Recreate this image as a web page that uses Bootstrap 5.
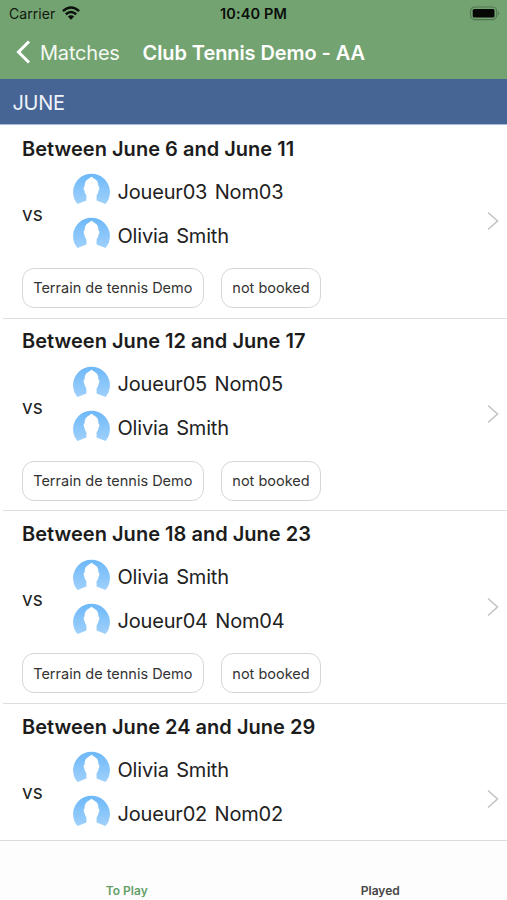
<!DOCTYPE html>
<html lang="en">
<head>
<meta charset="utf-8">
<meta name="viewport" content="width=device-width, initial-scale=1">
<title>Matches</title>
<link href="https://cdn.jsdelivr.net/npm/bootstrap@5.3.0/dist/css/bootstrap.min.css" rel="stylesheet">
<style>
body{font-family:Inter,"Liberation Sans",sans-serif;color:#222;background:#fff;height:900px;line-height:1.2}
.top-bar{background:#74a372;height:79px}
.status-row{height:27px;color:#10180f;padding:0 6px 0 9px}
.carrier{font-size:14px;letter-spacing:.05px;margin-top:1px}
.wifi{margin-left:7px;margin-bottom:2px}
.clock{font-size:14.5px;color:#0a0f0a;letter-spacing:.15px;margin-top:1px}
.title-row{height:52px;padding-left:16px;color:#fff}
.back-arrow{margin-top:-2px}
.back-text{font-size:20px;letter-spacing:-.2px;margin-left:9px;width:102.5px;color:#f3f9f1}
.page-title{font-size:20px;letter-spacing:-.08px}
.month-bar{background:#466494;height:46px;font-size:20px;letter-spacing:-.3px;padding:2px 0 0 12.5px;color:#eef3fa;border-bottom:1px solid #a9bddb}
.match-list{height:715px}
.match-item{height:192.67px;padding:10.6px 0 0 22px;background:#fff}
.match-item::after{content:"";position:absolute;left:3px;right:0;bottom:-1px;height:1px;background:#dedede;z-index:1}
.match-item:last-child::after{display:none}
.match-title{font-size:20px;line-height:26px;color:#1c1c1c;letter-spacing:.02px}
.pair{height:88px;margin-top:8.2px}
.versus{font-size:19px;width:50.5px;padding-top:3px}
.player{height:44px;font-size:20px;gap:8px;word-spacing:2px;letter-spacing:-.18px}
.player svg{margin-top:-5px}
.tag{height:40px;border:1.5px solid #d6d6d6;border-radius:12px;font-size:14.5px;color:#333;padding:0 10.7px 0 10.2px}
.tag-row{margin-top:10.2px;gap:17px}
.chev{right:8px;top:86.4px}
.tab-bar{height:60px;background:#fdfdfd;border-top:1px solid #dcdcdc;padding-bottom:2px;font-size:12px;color:#444}
.tab-on{color:#66a069}
</style>
<script src="https://cdn.jsdelivr.net/npm/bootstrap@5.3.0/dist/js/bootstrap.bundle.min.js"></script>
</head>
<body class="d-flex flex-column overflow-hidden">
<svg class="position-absolute" width="0" height="0" aria-hidden="true">
<defs>
<linearGradient id="sky" x1="0" y1="0" x2="0" y2="1"><stop offset="0" stop-color="#6db8f8"/><stop offset="1" stop-color="#9fd0fb"/></linearGradient>
<symbol id="face" viewBox="0 0 37 32"><path fill="url(#sky)" d="M4.5 31A18.4 18.4 0 1 1 32.5 31L23.6 27.4V22.4Q25.3 20.5 25.5 18Q26.8 16 26.1 13.8H25.4Q25.6 8.8 22.8 6.8L18.5 3.8L14.2 6.8Q11.4 8.8 11.6 13.8H10.9Q10.2 16 11.5 18Q11.7 20.5 13.4 22.4V27.4Z"/></symbol>
<symbol id="next" viewBox="0 0 12 20"><path d="M1 1.5L10.5 10L1 18.5" fill="none" stroke="#c4c4c4" stroke-width="1.6"/></symbol>
</defs>
</svg>
<header class="top-bar flex-shrink-0">
<div class="status-row d-flex align-items-center position-relative">
<span class="carrier">Carrier</span>
<svg class="wifi" width="18" height="14" viewBox="0 0 18 14" fill="none" stroke="#0c120b" stroke-width="2.5"><path d="M.9 5.2Q9-2.2 17.1 5.2M3.8 8.3Q9 3.6 14.2 8.3"/><path d="M9 13.7L5.8 10.5Q9 7.9 12.2 10.5Z" fill="#0c120b" stroke="none"/></svg>
<span class="clock fw-semibold position-absolute start-50 translate-middle-x">10:40 PM</span>
<svg class="ms-auto" width="32" height="15" viewBox="0 0 32 15"><rect x="1.6" y="1" width="26" height="12.6" rx="4" fill="none" stroke="#527750" stroke-width="1.2"/><rect x="3.7" y="3" width="21.8" height="8.6" rx="1.6" fill="#050805"/><path d="M29 5Q31.5 7.3 29 9.6Z" fill="#527750"/></svg>
</div>
<div class="title-row d-flex align-items-center">
<svg class="back-arrow" width="15" height="24" viewBox="0 0 15 24"><path d="M13 1.5L2.5 12L13 22.5" fill="none" stroke="#fff" stroke-width="3"/></svg>
<span class="back-text">Matches</span>
<span class="page-title fw-semibold">Club Tennis Demo - AA</span>
</div>
</header>
<div class="month-bar d-flex align-items-center flex-shrink-0">JUNE</div>
<main class="match-list overflow-hidden flex-shrink-0">
<article class="match-item position-relative">
<div class="match-title fw-semibold">Between June 6 and June 11</div>
<div class="pair d-flex align-items-center"><span class="versus">vs</span><div>
<div class="player d-flex align-items-center"><svg width="37" height="32"><use href="#face"/></svg><span>Joueur03 Nom03</span></div>
<div class="player d-flex align-items-center"><svg width="37" height="32"><use href="#face"/></svg><span>Olivia Smith</span></div></div></div>
<div class="tag-row d-flex"><span class="tag d-flex align-items-center">Terrain de tennis Demo</span><span class="tag d-flex align-items-center">not booked</span></div>
<svg class="chev position-absolute" width="12" height="20"><use href="#next"/></svg>
</article>
<article class="match-item position-relative">
<div class="match-title fw-semibold">Between June 12 and June 17</div>
<div class="pair d-flex align-items-center"><span class="versus">vs</span><div>
<div class="player d-flex align-items-center"><svg width="37" height="32"><use href="#face"/></svg><span>Joueur05 Nom05</span></div>
<div class="player d-flex align-items-center"><svg width="37" height="32"><use href="#face"/></svg><span>Olivia Smith</span></div></div></div>
<div class="tag-row d-flex"><span class="tag d-flex align-items-center">Terrain de tennis Demo</span><span class="tag d-flex align-items-center">not booked</span></div>
<svg class="chev position-absolute" width="12" height="20"><use href="#next"/></svg>
</article>
<article class="match-item position-relative">
<div class="match-title fw-semibold">Between June 18 and June 23</div>
<div class="pair d-flex align-items-center"><span class="versus">vs</span><div>
<div class="player d-flex align-items-center"><svg width="37" height="32"><use href="#face"/></svg><span>Olivia Smith</span></div>
<div class="player d-flex align-items-center"><svg width="37" height="32"><use href="#face"/></svg><span>Joueur04 Nom04</span></div></div></div>
<div class="tag-row d-flex"><span class="tag d-flex align-items-center">Terrain de tennis Demo</span><span class="tag d-flex align-items-center">not booked</span></div>
<svg class="chev position-absolute" width="12" height="20"><use href="#next"/></svg>
</article>
<article class="match-item position-relative">
<div class="match-title fw-semibold">Between June 24 and June 29</div>
<div class="pair d-flex align-items-center"><span class="versus">vs</span><div>
<div class="player d-flex align-items-center"><svg width="37" height="32"><use href="#face"/></svg><span>Olivia Smith</span></div>
<div class="player d-flex align-items-center"><svg width="37" height="32"><use href="#face"/></svg><span>Joueur02 Nom02</span></div></div></div>
<svg class="chev position-absolute" width="12" height="20"><use href="#next"/></svg>
</article>
</main>
<nav class="tab-bar d-flex align-items-end flex-shrink-0 fw-semibold text-center">
<span class="col-6 tab-on">To Play</span><span class="col-6">Played</span>
</nav>
</body>
</html>
